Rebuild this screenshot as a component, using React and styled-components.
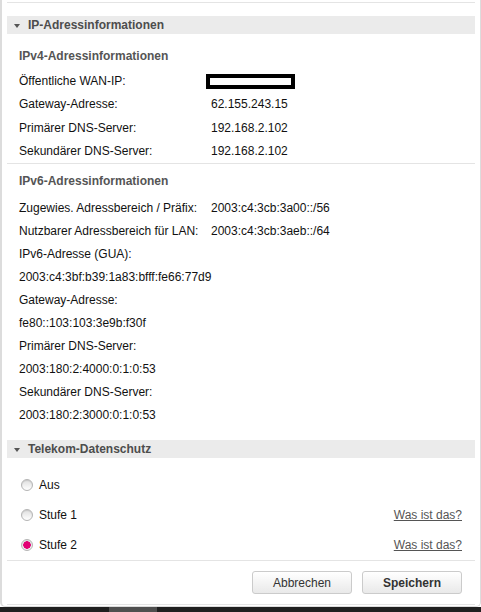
import styled, { createGlobalStyle } from 'styled-components';

const GlobalStyle = createGlobalStyle`
    html, body {
        margin: 0;
        padding: 0;
        background: #ffffff;
    }
    body {
        font-family: "Liberation Sans", Arial, sans-serif;
        font-size: 12px;
        color: #111;
    }
`;

const Page = styled.div`
    width: 481px;
    height: 612px;
    display: flex;
    flex-direction: column;
    overflow: hidden;
`;

const Panel = styled.div`
    box-sizing: border-box;
    flex: 1;
    border-left: 2px solid #dcdcdc;
    border-right: 1px solid #dcdcdc;
    border-bottom: 1px solid #dcdcdc;
    border-radius: 0 0 5px 5px;
    padding: 2px 5px 0 5px;
`;

const Rule = styled.div`
    height: 1px;
    background: #e4e4e4;
`;

const SectionHeader = styled.div`
    display: flex;
    align-items: center;
    gap: 8px;
    height: 18px;
    margin-top: ${p => p.$top}px;
    padding-left: 7px;
    background: #ebebeb;
    color: #4d4d4d;
    font-weight: bold;
`;

const Caret = styled.span`
    width: 0;
    height: 0;
    border-left: 3.5px solid transparent;
    border-right: 3.5px solid transparent;
    border-top: 4px solid #555;
    margin-top: 1px;
`;

const Block = styled.div`
    padding: ${p => p.$top}px 13px 0 12px;
`;

const SubTitle = styled.div`
    line-height: 23px;
    margin-bottom: ${p => p.$gap}px;
    color: #555;
    font-weight: bold;
`;

const InfoTable = styled.div`
    display: grid;
    grid-template-columns: 192px 1fr;
    grid-auto-rows: ${p => p.$row || 23}px;
    align-items: center;
`;

const Line = styled.div`
    line-height: 23px;
    white-space: nowrap;
`;

const Redacted = styled.span`
    display: block;
    width: 81px;
    height: 7px;
    margin-left: -5px;
    border: 4px solid #000;
    background: #fff;
`;

const RadioList = styled.div`
    padding: 12px 13px 0 14px;
`;

const RadioRow = styled.label`
    display: flex;
    align-items: center;
    height: 30px;
    gap: 6px;
`;

const RadioDot = styled.span`
    box-sizing: border-box;
    width: 12px;
    height: 12px;
    border-radius: 50%;
    border: 1px solid #b4b4b4;
    background: ${p => p.$checked
        ? 'radial-gradient(circle, #e20074 0 3.5px, #f0f0f0 4px)'
        : 'linear-gradient(#dedede, #ffffff)'};
    box-shadow: inset 0 1px 1px rgba(0, 0, 0, 0.1);
`;

const RadioLabel = styled.span`
    flex: 1;
    color: #111;
`;

const InfoLink = styled.a`
    color: #555;
    text-decoration: underline;
    cursor: pointer;
`;

const Actions = styled.div`
    display: flex;
    justify-content: flex-end;
    gap: 10px;
    padding: 10px 13px 10px 0;
`;

const Button = styled.button`
    width: 100px;
    height: 23px;
    border: 1px solid #cbcbcb;
    border-radius: 3px;
    background: linear-gradient(#ffffff, #e9e9e9);
    font-family: inherit;
    font-size: 12px;
    font-weight: ${p => (p.$primary ? 'bold' : 'normal')};
    color: #333;
    cursor: pointer;
`;

const ScrollTrack = styled.div`
    height: 5px;
    background: #1f1f1f;
    padding-left: 109px;
`;

const ScrollThumb = styled.div`
    width: 48px;
    height: 100%;
    background: #4f4f4f;
`;

const ipv4 = [
    ['Öffentliche WAN-IP:', null],
    ['Gateway-Adresse:', '62.155.243.15'],
    ['Primärer DNS-Server:', '192.168.2.102'],
    ['Sekundärer DNS-Server:', '192.168.2.102'],
];

const ipv6Pairs = [
    ['Zugewies. Adressbereich / Präfix:', '2003:c4:3cb:3a00::/56'],
    ['Nutzbarer Adressbereich für LAN:', '2003:c4:3cb:3aeb::/64'],
];

const ipv6Lines = [
    'IPv6-Adresse (GUA):',
    '2003:c4:3bf:b39:1a83:bfff:fe66:77d9',
    'Gateway-Adresse:',
    'fe80::103:103:3e9b:f30f',
    'Primärer DNS-Server:',
    '2003:180:2:4000:0:1:0:53',
    'Sekundärer DNS-Server:',
    '2003:180:2:3000:0:1:0:53',
];

const radios = [
    { label: 'Aus', link: false, checked: false },
    { label: 'Stufe 1', link: true, checked: false },
    { label: 'Stufe 2', link: true, checked: true },
];

function App() {
    return (
        <Page>
            <GlobalStyle />
            <Panel>
                <Rule />
                <SectionHeader $top={13}><Caret />IP-Adressinformationen</SectionHeader>

                <Block $top={10.5}>
                    <SubTitle $gap={1.75}>IPv4-Adressinformationen</SubTitle>
                    <InfoTable $row={23.5}>
                        {ipv4.map(([label, value]) => (
                            <>
                                <Line key={label}>{label}</Line>
                                <Line key={label + '-v'}>{value ?? <Redacted />}</Line>
                            </>
                        ))}
                    </InfoTable>
                </Block>
                <Rule />

                <Block $top={5.5}>
                    <SubTitle $gap={4}>IPv6-Adressinformationen</SubTitle>
                    <InfoTable>
                        {ipv6Pairs.map(([label, value]) => (
                            <>
                                <Line key={label}>{label}</Line>
                                <Line key={label + '-v'}>{value}</Line>
                            </>
                        ))}
                    </InfoTable>
                    {ipv6Lines.map((text, i) => (
                        <Line key={i}>{text}</Line>
                    ))}
                </Block>

                <SectionHeader $top={13.5}><Caret />Telekom-Datenschutz</SectionHeader>
                <RadioList>
                    {radios.map(r => (
                        <RadioRow key={r.label}>
                            <RadioDot $checked={r.checked} />
                            <RadioLabel>{r.label}</RadioLabel>
                            {r.link && <InfoLink>Was ist das?</InfoLink>}
                        </RadioRow>
                    ))}
                </RadioList>
                <Rule />
                <Actions>
                    <Button>Abbrechen</Button>
                    <Button $primary>Speichern</Button>
                </Actions>
                <Rule />
            </Panel>
            <ScrollTrack>
                <ScrollThumb />
            </ScrollTrack>
        </Page>
    );
}

export default App;
